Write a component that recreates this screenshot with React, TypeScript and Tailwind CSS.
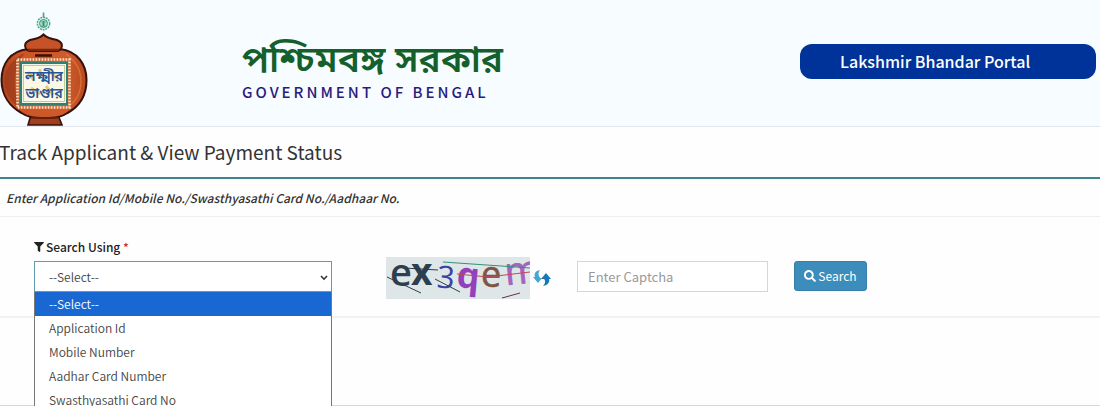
import React, { useState } from 'react';
import { FaFilter, FaSearch } from 'react-icons/fa';

const searchOptions = [
  '--Select--',
  'Application Id',
  'Mobile Number',
  'Aadhar Card Number',
  'Swasthyasathi Card No',
];

function PotLogo() {
  return (
    <svg width="90" height="126" viewBox="0 0 90 126" role="img" aria-label="Lakshmir Bhandar" className="shrink-0">
      <defs>
        <linearGradient id="clay" x1="0" x2="1">
          <stop offset="0" stopColor="#a8401c" />
          <stop offset="0.2" stopColor="#cb5526" />
          <stop offset="0.75" stopColor="#cf5a2a" />
          <stop offset="1" stopColor="#b64a1f" />
        </linearGradient>
      </defs>
      {/* Emblem */}
      <path d="M43.5 12.5v5" stroke="#5a9a86" strokeWidth="1.6" />
      <circle cx="43.5" cy="23.5" r="6.2" fill="#d9f1e8" stroke="#4fa58a" strokeWidth="1.4" strokeDasharray="2 0.8" />
      <circle cx="43.5" cy="23.5" r="4" fill="#a9dcc8" stroke="#3b9a7b" />
      <path d="M41.5 22h4M42 24h3M41.5 26h4M43.5 21v5" stroke="#2c7f66" strokeWidth="0.8" />
      {/* Pot */}
      <path d="M31 115l-3 10h34l-4-10z" fill="#a33e1a" stroke="#38100c" strokeWidth="1.6" />
      <path d="M28 49C10 51 1.500 64 1.500 80c0 16 9 27 20 33 6 4 11 5 23 5s17-1 23-5c11-6 19-17 19-33S77 51 60 49z" fill="url(#clay)" stroke="#38100c" strokeWidth="2" />
      <path d="M25 53C13 58 5 68 5 81c0 13 7 22 16 28C14 94 10 71 25 53z" fill="#9b3919" opacity="0.7" />
      <path d="M66 54c8 6 15 15 15 27s-6 21-13 26" fill="none" stroke="#e17b43" strokeWidth="1.500" opacity="0.7" />
      <path d="M26 49c-2-4-1-7 4-9 6-1 10-2 13.500-5.500C47 38 51 39 57 40c5 2 6 5 4 9l-3 2H29z" fill="#c65327" stroke="#38100c" strokeWidth="2" />
      <path d="M28 50h31" stroke="#752913" strokeWidth="2.500" />
      <path d="M35 55.500h17" stroke="#38100c" strokeWidth="2.500" />
      <path d="M31 118h28" stroke="#6e2412" strokeWidth="1.500" />
      {/* Woven frame around the name */}
      <rect x="17.500" y="59.500" width="52" height="48" fill="none" stroke="#ffe4c4" strokeWidth="2.600" strokeDasharray="1.800 1.200" />
      <rect x="21" y="63" width="46" height="41" fill="#f1f5e6" stroke="#337e73" strokeWidth="2" />
      <rect x="23.500" y="65.500" width="41" height="36" fill="#fbf8e6" stroke="#b5bf87" strokeWidth="0.800" />
      <path d="M28 72l6 8M40 69v9M49 70l7 8M31 88l9 6M46 86l7 9" stroke="#e2cc74" strokeWidth="3" />
      <text x="44" y="81" textAnchor="middle" fontSize="14" fontWeight="600" fill="#28549a" fontFamily="'Noto Sans Bengali', sans-serif">লক্ষ্মীর</text>
      <text x="44" y="98" textAnchor="middle" fontSize="14" fontWeight="600" fill="#28549a" fontFamily="'Noto Sans Bengali', sans-serif">ভাণ্ডার</text>
    </svg>
  );
}

function CaptchaImage() {
  return (
    <svg width="144" height="42" viewBox="0 0 144 42" role="img" aria-label="Captcha" className="shrink-0">
      <rect width="144" height="42" fill="#dfe6e8" />
      <g fontFamily="'Open Sans', sans-serif">
        <text x="4" y="29" fontSize="38" fontWeight="600" fill="#2b3f51">e</text>
        <text x="25" y="28" fontSize="37" fontWeight="700" fill="#2b3f51">x</text>
        <text x="51" y="31" fontSize="31" fill="#3545a5" transform="rotate(4 58 20)">3</text>
        <text x="71" y="31" fontSize="36" fontWeight="700" fill="#9440bd" transform="rotate(5 82 20)">q</text>
        <text x="95" y="30" fontSize="36" fill="#7d5546" stroke="#7d5546" strokeWidth="0.6">e</text>
        <text x="119" y="27" fontSize="38" fill="#a264bd" stroke="#a264bd" strokeWidth="0.8" transform="rotate(-6 132 18)">m</text>
      </g>
      <g fill="none" strokeWidth="1">
        <path d="M1 20l34 16M18 11l34 2M49 22l25 13" stroke="#303c46" />
        <path d="M57 5l87 6" stroke="#339077" />
        <path d="M71 17l31 3 42-5" stroke="#c4455b" />
        <path d="M116 41l18-5" stroke="#6b3045" />
      </g>
    </svg>
  );
}

function RefreshArrows() {
  return (
    <svg width="18" height="18" viewBox="0 0 18 18" aria-hidden="true">
      <path d="M7 1C2 2 1 5 2 8H0l5 6 4-5H7C5 6 5 3 7 1z" fill="#47a5d4" />
      <path d="M10 17c5-1 7-4 6-7h2l-5-6-5 6h3c2 2 1 5-1 7z" fill="#1778b2" />
    </svg>
  );
}

export default function App() {
  const [selected, setSelected] = useState(searchOptions[0]);

  return (
    <div className="h-screen overflow-hidden bg-[#fefefe] font-['Noto_Sans_CJK_SC',sans-serif] text-[#333333]">
      <div className="h-full border-b border-[#d2dadc]">
        {/* Header */}
        <header className="flex items-start border-b border-[#e3e7ee] bg-[#f6fcff]">
          <PotLogo />
          <div className="ml-[152px] pt-10">
            <div className="text-[37px] font-semibold leading-[46px] text-[#14602c] font-['Noto_Sans_Bengali',sans-serif]">পশ্চিমবঙ্গ সরকার</div>
            <div className="text-[15px] font-medium leading-3 tracking-[3px] text-[#2a1a7e]">GOVERNMENT OF BENGAL</div>
          </div>
          <div className="ml-auto mr-1 mt-11 w-[296px] rounded-xl bg-[#003399] pl-10 text-base font-medium leading-[35px] text-white">
            Lakshmir Bhandar Portal
          </div>
        </header>

        {/* Page title */}
        <h1 className="-ml-px border-b-2 border-[#3c858f] text-[19px] leading-[50px]">Track Applicant &amp; View Payment Status</h1>
        <p className="border-b border-[#eeeeee] pl-1.5 text-xs font-medium italic leading-[37px]">
          Enter Application Id/Mobile No./Swasthyasathi Card No./Aadhaar No.
        </p>

        {/* Search form */}
        <form className="flex items-start border-b-2 border-[#f2f2f2] pb-[17px] pl-[34px] pt-5" onSubmit={(e) => e.preventDefault()}>
          <div className="relative w-[298px]">
            <label htmlFor="search-using" className="flex h-5 items-center gap-0.5 text-xs font-medium text-[#222222]">
              <FaFilter size={10} />
              <span>Search Using <span className="text-[#b9303c]">*</span></span>
            </label>
            <div className="relative mt-1">
              <select
                id="search-using"
                value={selected}
                onChange={(e) => setSelected(e.target.value)}
                className="block h-[31px] w-full appearance-none border border-[#6499b4] bg-white pl-3.5 text-xs font-[350] text-[#444444] outline-none"
              >
                {searchOptions.map((option) => (
                  <option key={option}>{option}</option>
                ))}
              </select>
              <svg width="8" height="6" viewBox="0 0 8 6" className="pointer-events-none absolute right-1 top-3.5" aria-hidden="true">
                <path d="M1 1l3 3.200L7 1" fill="none" stroke="#333333" strokeWidth="1.600" />
              </svg>
            </div>
            <ul className="absolute left-0 top-full z-10 w-full border-x border-[#777777] bg-white text-xs font-[350] leading-6 text-[#444444]">
              {searchOptions.map((option) => (
                <li
                  key={option}
                  onClick={() => setSelected(option)}
                  className={option === selected ? 'bg-[#1967d2] pl-3.5 text-white' : 'pl-3.5'}
                >
                  {option}
                </li>
              ))}
            </ul>
          </div>

          <div className="ml-[54px] mt-5 flex items-center gap-[3px]">
            <CaptchaImage />
            <button type="button" aria-label="Refresh captcha">
              <RefreshArrows />
            </button>
          </div>

          <input
            type="text"
            aria-label="Enter Captcha"
            placeholder="Enter Captcha"
            className="ml-[26px] mt-6 h-[31px] w-[191px] border border-[#d2d6de] bg-white px-2.5 text-[13px] outline-none placeholder:text-[#999999]"
          />
          <button
            type="submit"
            className="ml-[26px] mt-6 flex h-[30px] w-[73px] items-center justify-center gap-0.5 rounded-[3px] border border-[#367fa9] bg-[#3c8dbc] text-xs text-white"
          >
            <FaSearch size={12} />
            Search
          </button>
        </form>
      </div>
    </div>
  );
}
